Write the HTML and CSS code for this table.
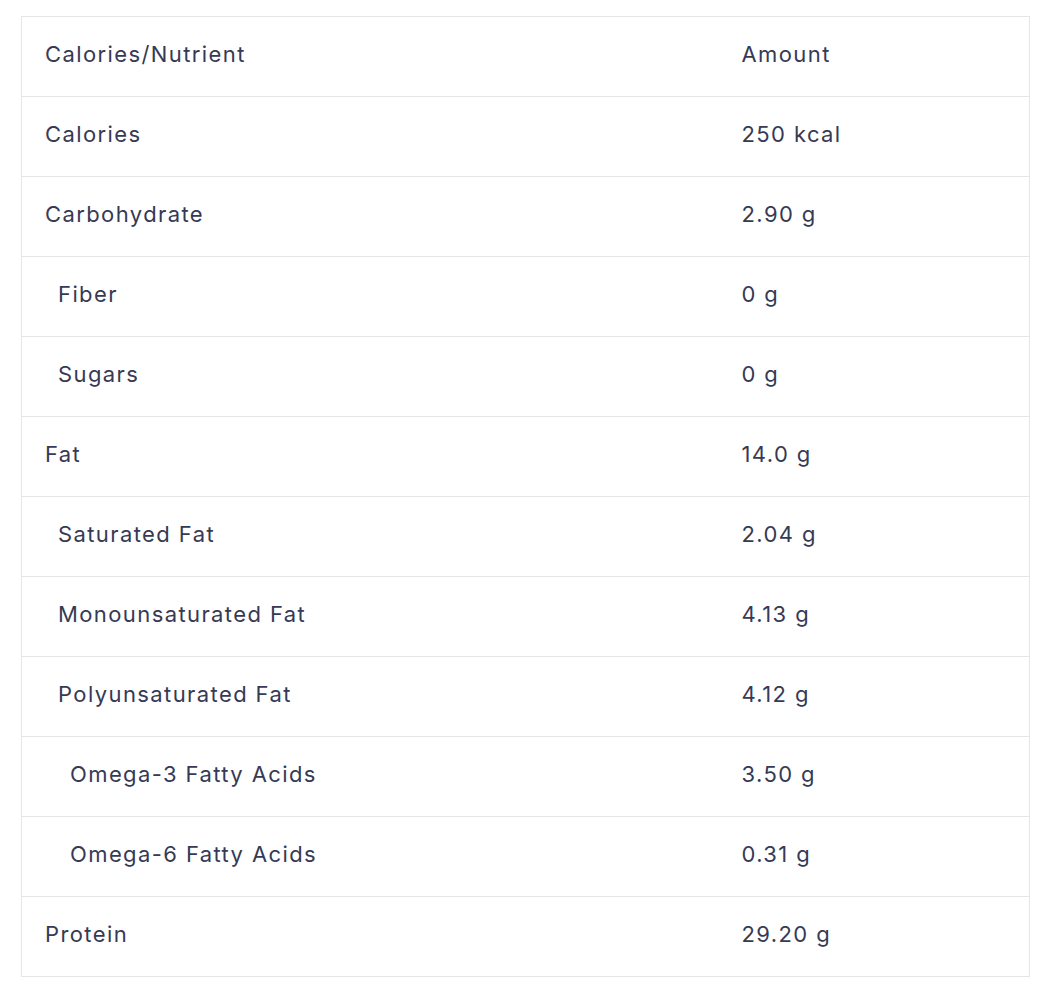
FILE: index.html
```html
<!DOCTYPE html>
<html>
<head>
<meta charset="utf-8">
<link rel="stylesheet" href="styles.css">
</head>
<body>
<div class="page">
<table class="nutrition">
  <tr><td class="name">Calories/Nutrient</td><td class="amount">Amount</td></tr>
  <tr><td class="name">Calories</td><td class="amount">250 kcal</td></tr>
  <tr><td class="name">Carbohydrate</td><td class="amount">2.90 g</td></tr>
  <tr><td class="name sub">Fiber</td><td class="amount">0 g</td></tr>
  <tr><td class="name sub">Sugars</td><td class="amount">0 g</td></tr>
  <tr><td class="name">Fat</td><td class="amount">14.0 g</td></tr>
  <tr><td class="name sub">Saturated Fat</td><td class="amount">2.04 g</td></tr>
  <tr><td class="name sub">Monounsaturated Fat</td><td class="amount">4.13 g</td></tr>
  <tr><td class="name sub">Polyunsaturated Fat</td><td class="amount">4.12 g</td></tr>
  <tr><td class="name subsub">Omega-3 Fatty Acids</td><td class="amount">3.50 g</td></tr>
  <tr><td class="name subsub">Omega-6 Fatty Acids</td><td class="amount">0.31 g</td></tr>
  <tr><td class="name">Protein</td><td class="amount">29.20 g</td></tr>
</table>
</div>
</body>
</html>
```
FILE: styles.css
```css
html, body {
  margin: 0;
  padding: 0;
  background: #ffffff;
}
.page {
  padding: 16px 0 0 21px;
}
.nutrition {
  border-collapse: collapse;
  width: 1009px;
  font-family: "Inter", "Noto Sans", sans-serif;
  font-size: 22px;
  letter-spacing: 1.4px;
  color: #363a55;
}
.nutrition td {
  border: 1px solid #e6e6e6;
  height: 80px;
  padding: 0 23px 6px 23px;
  box-sizing: border-box;
  vertical-align: middle;
}
.nutrition .name {
  width: 697px;
  border-right: none;
}
.nutrition .amount {
  border-left: none;
}
.nutrition .sub {
  padding-left: 36px;
}
.nutrition .subsub {
  padding-left: 48px;
}
```
